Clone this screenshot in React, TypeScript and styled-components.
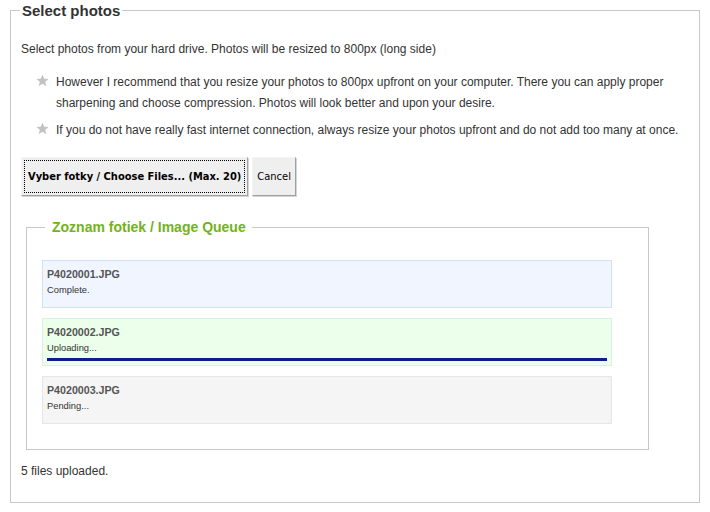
import React from 'react';
import styled, { createGlobalStyle } from 'styled-components';

const GlobalStyle = createGlobalStyle`
  html, body {
    margin: 0;
    padding: 0;
    background: #ffffff;
  }
  body {
    font-family: "Liberation Sans", Arial, sans-serif;
    font-size: 12px;
    color: #333333;
  }
`;

const Page = styled.div`
  padding: 2px 0 0 10px;
`;

const Panel = styled.fieldset`
  box-sizing: border-box;
  width: 690px;
  margin: 0;
  padding: 0 10px 20px 10px;
  border: 1px solid #c8c8c8;
`;

const PanelLegend = styled.legend`
  margin-left: -1px;
  padding: 0 2px;
  font-size: 15px;
  line-height: 17px;
  font-weight: bold;
  color: #333333;
`;

const Text = styled.p<{ $top: number }>`
  margin: ${(p) => p.$top}px 0 0;
  line-height: 21px;
`;

const Tips = styled.ul`
  list-style: none;
  margin: 12px 0 0;
  padding: 0 0 0 15px;
`;

const Tip = styled.li`
  display: flex;
  align-items: flex-start;
  line-height: 21px;

  & + & {
    margin-top: 6px;
  }

  svg {
    flex: none;
    margin: 2px 7px 0 0;
  }
`;

const Buttons = styled.div`
  display: flex;
  gap: 4px;
  margin-top: 16px;
`;

const Button = styled.button<{ $primary?: boolean }>`
  height: 39px;
  padding: 0 ${(p) => (p.$primary ? 6 : 4)}px;
  background: #efefef;
  border: 1px solid;
  border-color: #f4f4f4 #a0a0a0 #a0a0a0 #f4f4f4;
  box-shadow: 1px 1px 0 #d4d4d4;
  font-family: "DejaVu Sans Condensed", "DejaVu Sans", sans-serif;
  font-size: 11px;
  font-weight: ${(p) => (p.$primary ? 'bold' : 'normal')};
  color: #000000;
  outline: ${(p) => (p.$primary ? '1px dotted #000' : 'none')};
  outline-offset: -4px;
`;

const Queue = styled.fieldset`
  box-sizing: border-box;
  width: 623px;
  margin: 23px 0 0 5px;
  padding: 25px 15px 25px 15px;
  border: 1px solid #c8c8c8;
`;

const QueueLegend = styled.legend`
  margin-left: 3px;
  padding: 0 6px 0 7px;
  font-size: 14px;
  line-height: 16px;
  font-weight: bold;
  color: #72b21c;
`;

const ItemList = styled.div`
  display: flex;
  flex-direction: column;
  gap: 10px;
`;

const tones = {
  done: { bg: '#f0f5ff', border: '#cee2f2' },
  active: { bg: '#ebffeb', border: '#ddf0dd' },
  waiting: { bg: '#f5f5f5', border: '#e6e6e6' },
};

type Tone = keyof typeof tones;

const Item = styled.div<{ $tone: Tone }>`
  box-sizing: border-box;
  width: 570px;
  padding: 4px;
  background: ${(p) => tones[p.$tone].bg};
  border: 1px solid ${(p) => tones[p.$tone].border};
`;

const FileName = styled.div`
  font-size: 10.67px;
  line-height: 18px;
  font-weight: bold;
  color: #555555;
`;

const FileStatus = styled.div`
  font-size: 9.33px;
  line-height: 14px;
  color: #333333;
`;

const Bar = styled.div`
  height: 3px;
  margin-top: 3px;
  background: #0f1c8c;
`;

const Star = () => (
  <svg width="13" height="13" viewBox="0 0 24 24">
    <polygon
      points="12,1 15.1,8.6 23.3,9.2 17,14.5 19,22.5 12,18.2 5,22.5 7,14.5 0.7,9.2 8.9,8.6"
      fill="#c2c2c2"
    />
  </svg>
);

const files: { name: string; status: string; tone: Tone; progress: number }[] = [
  { name: 'P4020001.JPG', status: 'Complete.', tone: 'done', progress: 0 },
  { name: 'P4020002.JPG', status: 'Uploading...', tone: 'active', progress: 100 },
  { name: 'P4020003.JPG', status: 'Pending...', tone: 'waiting', progress: 0 },
];

export default function App() {
  return (
    <>
      <GlobalStyle />
      <Page>
        <Panel>
          <PanelLegend>Select photos</PanelLegend>
          <Text $top={20}>Select photos from your hard drive. Photos will be resized to 800px (long side)</Text>
          <Tips>
            <Tip>
              <Star />
              <span>
                However I recommend that you resize your photos to 800px upfront on your computer. There you can
                apply proper sharpening and choose compression. Photos will look better and upon your desire.
              </span>
            </Tip>
            <Tip>
              <Star />
              <span>
                If you do not have really fast internet connection, always resize your photos upfront and do not add
                too many at once.
              </span>
            </Tip>
          </Tips>
          <Buttons>
            <Button $primary>Vyber fotky / Choose Files... (Max. 20)</Button>
            <Button>Cancel</Button>
          </Buttons>
          <Queue>
            <QueueLegend>Zoznam fotiek / Image Queue</QueueLegend>
            <ItemList>
              {files.map((f) => (
                <Item key={f.name} $tone={f.tone}>
                  <FileName>{f.name}</FileName>
                  <FileStatus>{f.status}</FileStatus>
                  <Bar style={{ width: `${f.progress}%` }} />
                </Item>
              ))}
            </ItemList>
          </Queue>
          <Text $top={11}>5 files uploaded.</Text>
        </Panel>
      </Page>
    </>
  );
}
